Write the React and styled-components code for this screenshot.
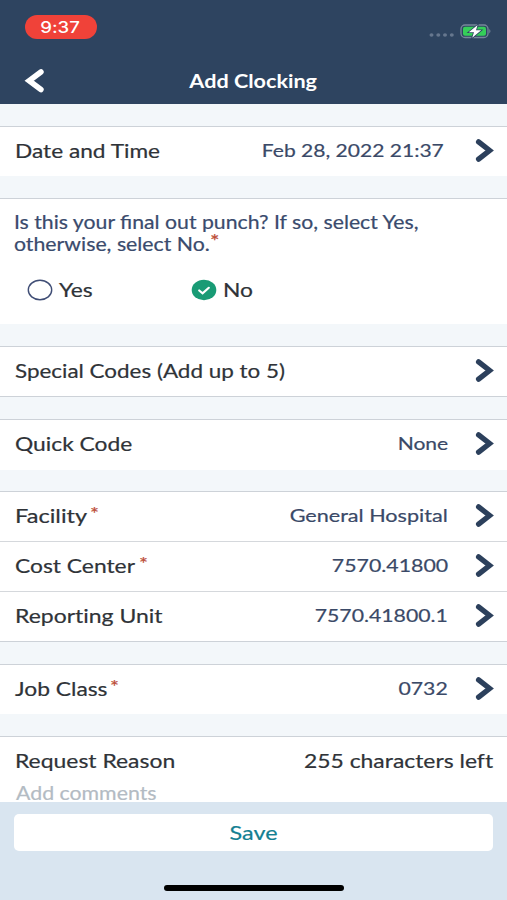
import React from 'react';
import styled, { createGlobalStyle } from 'styled-components';

const Global = createGlobalStyle`
  * { box-sizing: border-box; }
  html, body { margin: 0; padding: 0; background: #f3f7fa; }
  body { font-family: Lato, "Liberation Sans", sans-serif; color: #2f3338; overflow: hidden; }
`;

const Screen = styled.main`
  display: flex;
  flex-direction: column;
  width: 507px;
  height: 900px;
  overflow: hidden;
  background: #f3f7fa;
`;

const Header = styled.header`
  flex: none;
  height: 104px;
  background: #2e4460;
  color: #fff;
`;

const StatusBar = styled.div`
  display: flex;
  align-items: flex-start;
  justify-content: space-between;
  height: 56px;
  padding: 15px 15px 0 24.5px;
`;

const TimePill = styled.div`
  display: flex;
  align-items: center;
  justify-content: center;
  width: 72px;
  height: 24px;
  border-radius: 12px;
  background: #f04239;
`;

const StatusIcons = styled.svg`
  display: block;
  width: 66px;
  height: 18px;
  margin-top: 7px;
`;

const NavBar = styled.div`
  display: grid;
  grid-template-columns: 60px 1fr 60px;
  align-items: center;
  height: 48px;
`;

const BackButton = styled.button`
  display: flex;
  width: 60px;
  height: 48px;
  padding: 12px 0 0 24px;
  border: 0;
  background: none;
`;

const Title = styled.h1`
  margin: 1px 0 0;
  text-align: center;
  font-size: 18px;
  line-height: 24px;
  font-weight: 700;
`;

/* Wide lettering: glyphs are extended horizontally from the chosen edge. */
const Text = styled.span`
  display: inline-block;
  white-space: nowrap;
  font-size: ${p => p.$size || 19.5}px;
  line-height: 24px;
  font-weight: ${p => p.$weight || 400};
  font-family: ${p => p.$font || 'inherit'};
  font-variant-ligatures: ${p => (p.$ligatures ? 'normal' : 'none')};
  -webkit-text-stroke: ${p => (p.$weight ? 0 : 0.2)}px currentColor;
  color: ${p => p.$color || 'inherit'};
  transform: scaleX(${p => p.$wide || 1.17});
  transform-origin: ${p => p.$from || 'left'} center;
`;

const Group = styled.section`
  flex: none;
  height: ${p => p.$height}px;
  margin-top: ${p => p.$gap || 22}px;
  border-top: 1px solid #cdd2d8;
  border-bottom: ${p => (p.$closed ? '1px solid #cdd2d8' : '0')};
  background: #fff;
`;

const RowLine = styled.div`
  display: flex;
  align-items: center;
  height: 49px;
  padding: 0 13px 2px 15px;
  & + & { height: 50px; border-top: 1px solid #d5d8dc; }
`;

const Value = styled.div`
  display: flex;
  justify-content: flex-end;
  flex: 1;
  padding-right: ${p => p.$inset}px;
  margin-top: -2px;
  color: #3a4967;
`;

const Question = styled.div`
  padding: 12px 14px 0;
  color: #3a4b6d;
  & > div { display: flex; align-items: center; height: 22px; }
  & span { line-height: 22px; }
`;

const Options = styled.div`
  display: grid;
  grid-template-columns: 164px 1fr;
  padding: 23px 0 0 27px;
`;

const Option = styled.label`
  display: flex;
  align-items: center;
  gap: 6px;
  height: 24px;
`;

const ReasonHead = styled.div`
  display: flex;
  justify-content: space-between;
  padding: 12px 14px 0 15px;
`;

const Comments = styled.div`
  padding: 8px 16px 0;
`;

const Footer = styled.footer`
  display: flex;
  flex-direction: column;
  align-items: center;
  flex: none;
  height: 98px;
  padding-top: 12px;
  background: #d9e5f0;
`;

const SaveButton = styled.button`
  width: 479px;
  height: 37px;
  padding: 0 0 2px;
  border: 0;
  border-radius: 5px;
  background: #fff;
  color: #137f92;
  font-family: inherit;
`;

const HomeBar = styled.div`
  width: 180px;
  height: 6px;
  margin-top: 34px;
  border-radius: 3px;
  background: #000;
`;

const Star = styled(Text)`
  color: #bb4b34;
  margin-left: ${p => p.$shift}px;
  margin-top: -6px;
  line-height: 20px;
`;

const Icon = styled.svg`
  display: block;
  flex: none;
  overflow: visible;
`;

const Chevron = () => (
  <Icon width="20" height="26" viewBox="0 0 20 26">
    <path d="M4.6 3.9 L15.6 12.5 L4.6 21.1" fill="none" stroke="#2c405c" strokeWidth="5.3" strokeLinecap="round" strokeLinejoin="miter" />
  </Icon>
);

const Row = ({ label, wide, star, value, valueWide, inset = 26 }) => (
  <RowLine>
    <Text $wide={wide}>{label}</Text>
    {star && <Star $shift={star} $size={18}>*</Star>}
    <Value $inset={inset}>
      {value && <Text $size={18} $wide={valueWide} $from="right">{value}</Text>}
    </Value>
    <Chevron />
  </RowLine>
);

export default function App() {
  return (
    <Screen>
      <Global />
      <Header>
        <StatusBar>
          <TimePill>
            <Text $size={16} $weight={500} $wide={1.16} $font='Inter, sans-serif' $from="center">9:37</Text>
          </TimePill>
          <StatusIcons viewBox="0 0 66 18">
            {[5.5, 12.3, 19, 25.8].map(x => <ellipse key={x} cx={x} cy="13" rx="2" ry="1.7" fill="#66778e" />)}
            <rect x="35" y="3" width="27" height="12.5" rx="4" fill="none" stroke="#77879a" strokeWidth="1.3" />
            <rect x="37" y="4.8" width="23" height="9" rx="2" fill="#35ce59" />
            <path d="M63.3 7 Q65.6 9.2 63.3 11.4Z" fill="#77879a" />
            <path d="M51.6 3 L42.8 10.2 L48 10.2 L46.2 15.8 L55.2 8.2 L50 8.2Z" fill="#fff" stroke="#2e4460" strokeWidth="1.6" paintOrder="stroke" />
          </StatusIcons>
        </StatusBar>
        <NavBar>
          <BackButton aria-label="Back">
            <Icon width="22" height="26" viewBox="0 0 22 26">
              <path d="M16.9 4 L5.2 12.8 L16.9 21.6" fill="none" stroke="#fff" strokeWidth="5.6" strokeLinecap="round" strokeLinejoin="miter" />
            </Icon>
          </BackButton>
          <Title><Text $size={18} $weight={700} $wide={1.2} $from="center">Add Clocking</Text></Title>
        </NavBar>
      </Header>

      <Group $height={50}>
        <Row label="Date and Time" wide={1.163} value="Feb 28, 2022 21:37" valueWide={1.168} inset={30} />
      </Group>

      <Group $height={126}>
        <Question>
          <div><Text $size={18.5} $wide={1.147} $ligatures>Is this your final out punch? If so, select Yes,</Text></div>
          <div>
            <Text $size={18.5} $wide={1.15}>otherwise, select No.</Text>
            <Star $shift={26} $size={19}>*</Star>
          </div>
        </Question>
        <Options>
          <Option>
            <Icon width="26" height="22" viewBox="0 0 26 22">
              <ellipse cx="13" cy="11" rx="11.7" ry="9.7" fill="#fff" stroke="#3f4d75" strokeWidth="1.4" />
            </Icon>
            <Text>Yes</Text>
          </Option>
          <Option>
            <Icon width="26" height="22" viewBox="0 0 26 22">
              <ellipse cx="13" cy="11" rx="12.3" ry="10.2" fill="#199b75" />
              <path d="M8.2 11.5 L11.6 14.4 L17.8 8.8" fill="none" stroke="#fff" strokeWidth="2.2" strokeLinecap="round" />
            </Icon>
            <Text>No</Text>
          </Option>
        </Options>
      </Group>

      <Group $height={51} $closed>
        <Row label="Special Codes (Add up to 5)" wide={1.15} />
      </Group>

      <Group $height={51}>
        <Row label="Quick Code" value="None" />
      </Group>

      <Group $height={151} $gap={21} $closed>
        <Row label="Facility" wide={1.21} star={15} value="General Hospital" valueWide={1.2} />
        <Row label="Cost Center" star={21} value="7570.41800" valueWide={1.185} />
        <Row label="Reporting Unit" wide={1.178} value="7570.41800.1" valueWide={1.18} />
      </Group>

      <Group $height={50}>
        <Row label="Job Class" star={16} value="0732" valueWide={1.18} />
      </Group>

      <Group $height={66}>
        <ReasonHead>
          <Text $wide={1.175}>Request Reason</Text>
          <Text $wide={1.174} $from="right">255 characters left</Text>
        </ReasonHead>
        <Comments><Text $wide={1.093} $color="#b3bbc3">Add comments</Text></Comments>
      </Group>

      <Footer>
        <SaveButton><Text $size={20} $from="center">Save</Text></SaveButton>
        <HomeBar />
      </Footer>
    </Screen>
  );
}
